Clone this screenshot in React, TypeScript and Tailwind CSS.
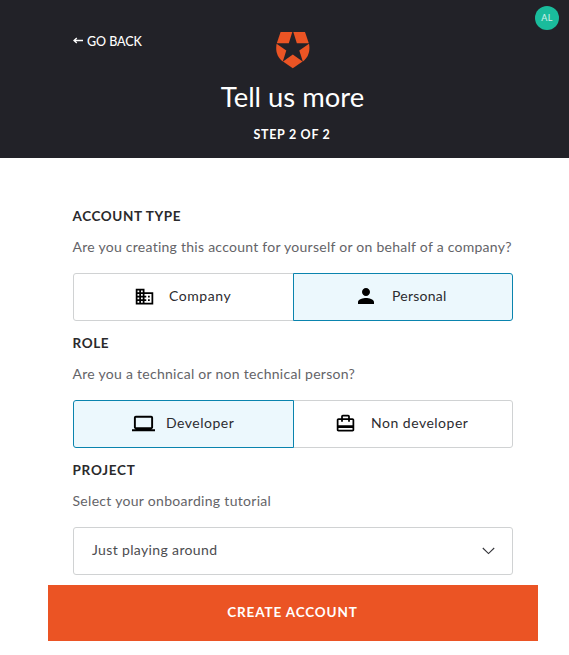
import type { ReactNode } from "react";
import { MdBusiness, MdPerson, MdLaptop, MdCardTravel } from "react-icons/md";

function Section({ title, hint, children }: { title: ReactNode; hint: ReactNode; children: ReactNode }) {
  return (
    <section className="h-[127px]">
      <h2 className="-ml-[0.5px] h-5 text-[13.5px] leading-5 font-bold text-[#2a2a2c]">{title}</h2>
      <p className="mt-[11px] -ml-[0.5px] h-5 whitespace-nowrap text-[14px] leading-5 text-[#646468]">{hint}</p>
      <div className="mt-4 flex h-12">{children}</div>
    </section>
  );
}

const idle = "border-[#d0d2d3] bg-white";
const active = "z-10 border-[#0a84ae] bg-[#ecf8fd]";

export default function App() {
  return (
    <div className="relative h-[655px] w-[569px] overflow-hidden bg-white font-['Lato',sans-serif]">
      <header className="flex h-[158px] flex-col items-center bg-[#222228] text-white">
        <button className="mt-[31px] -mb-5 ml-[73px] flex h-5 items-center self-start text-[12.5px] leading-5 font-medium whitespace-nowrap">
          <svg className="mr-[4px] mb-px" width="10" height="7" viewBox="0 0 10 7" fill="none" stroke="#fff" strokeWidth="1.3">
            <path d="M10 3.5H1M3.8 1L1 3.5L3.8 6" />
          </svg>
          <span className="mt-px tracking-[-0.05px]">GO BACK</span>
        </button>
        <svg className="mt-px ml-[16px]" width="34" height="37" viewBox="0 0 34 37" fill="#eb5424">
          <path d="M4.6 0H16.3L12.8 11.2H.8Z" />
          <path d="M17.3 0H29L32.8 11.2H20.8Z" />
          <path d="M.6 11.7L10.3 18.5L6.8 29.5C1.3 25.5 -.8 19 .6 11.7Z" />
          <path d="M33 11.7L23.3 18.5L26.8 29.5C32.3 25.5 34.4 19 33 11.7Z" />
          <path d="M16.8 22.4L26.6 29.6L16.8 36.2L7 29.6Z" />
        </svg>
        <h1 className="mt-[10px] ml-[16px] h-9 text-[27.4px] leading-9 whitespace-nowrap">Tell us more</h1>
        <p className="mt-[10px] ml-[15px] h-5 text-[12.5px] leading-5 font-bold tracking-[0.7px] whitespace-nowrap">STEP 2 OF 2</p>
      </header>
      <div className="absolute top-[6px] right-[10px] flex size-6 items-center justify-center rounded-full bg-[#1abc9c] text-[9px] tracking-[0.3px] text-white/80">AL</div>

      <main className="ml-[73px] w-[440px] pt-12">
        <Section title={<span className="tracking-[0.6px]">ACCOUNT TYPE</span>} hint={<span className="tracking-[0.262px]">Are you creating this account for yourself or on behalf of a company?</span>}>
          <button className={`relative flex w-[221px] items-center rounded-l-[3px] border pb-[2px] pl-[59px] text-[14px] text-[#2c2c30] ${idle}`}>
            <MdBusiness className="mr-[0.5px] ml-[0.5px] size-[21px] text-black" />
            <span className="mb-px ml-[14px] tracking-[0.55px] whitespace-nowrap">Company</span>
          </button>
          <button className={`relative -ml-px flex w-[220px] items-center rounded-r-[3px] border pb-[2px] pl-[60px] text-[14px] text-[#2c2c30] ${active}`}>
            <MdPerson className="size-6 text-black" />
            <span className="mb-px ml-[14px] tracking-[0.25px] whitespace-nowrap">Personal</span>
          </button>
        </Section>
        <Section title={<span className="tracking-[0.6px]">ROLE</span>} hint={<span className="tracking-[0.275px]">Are you a technical or non technical person?</span>}>
          <button className={`relative flex w-[221px] items-center rounded-l-[3px] border pb-[2px] pl-[58px] text-[14px] text-[#2c2c30] ${active}`}>
            <MdLaptop className="size-[23px] text-black" />
            <span className="mb-px ml-[11px] tracking-[0.5px] whitespace-nowrap">Developer</span>
          </button>
          <button className={`relative -ml-px flex w-[220px] items-center rounded-r-[3px] border pb-[2px] pl-[41px] text-[14px] text-[#2c2c30] ${idle}`}>
            <MdCardTravel className="size-[21px] text-black" />
            <span className="mb-px ml-[15px] tracking-[0.5px] whitespace-nowrap">Non developer</span>
          </button>
        </Section>
        <Section title={<span className="tracking-[0.75px]">PROJECT</span>} hint={<span className="tracking-[0.3px]">Select your onboarding tutorial</span>}>
          <button className="flex w-full items-center justify-between rounded-[3px] border border-[#d0d2d3] bg-white pr-[17px] pb-[2px] pl-[18px] text-[14px] text-[#4c4c50]">
            <span className="mb-px tracking-[0.36px] whitespace-nowrap">Just playing around</span>
            <svg className="mt-[2px]" width="13" height="8" viewBox="0 0 13 8" fill="none" stroke="#333338" strokeWidth="1.1">
              <path d="M.8 1L6.5 6.6L12.2 1" />
            </svg>
          </button>
        </Section>
      </main>
      <button className="-mt-[2px] ml-12 flex h-14 w-[490px] items-center justify-center bg-[#eb5424] pb-px pr-px text-[13.5px] font-bold tracking-[0.85px] text-white">CREATE ACCOUNT</button>
    </div>
  );
}
